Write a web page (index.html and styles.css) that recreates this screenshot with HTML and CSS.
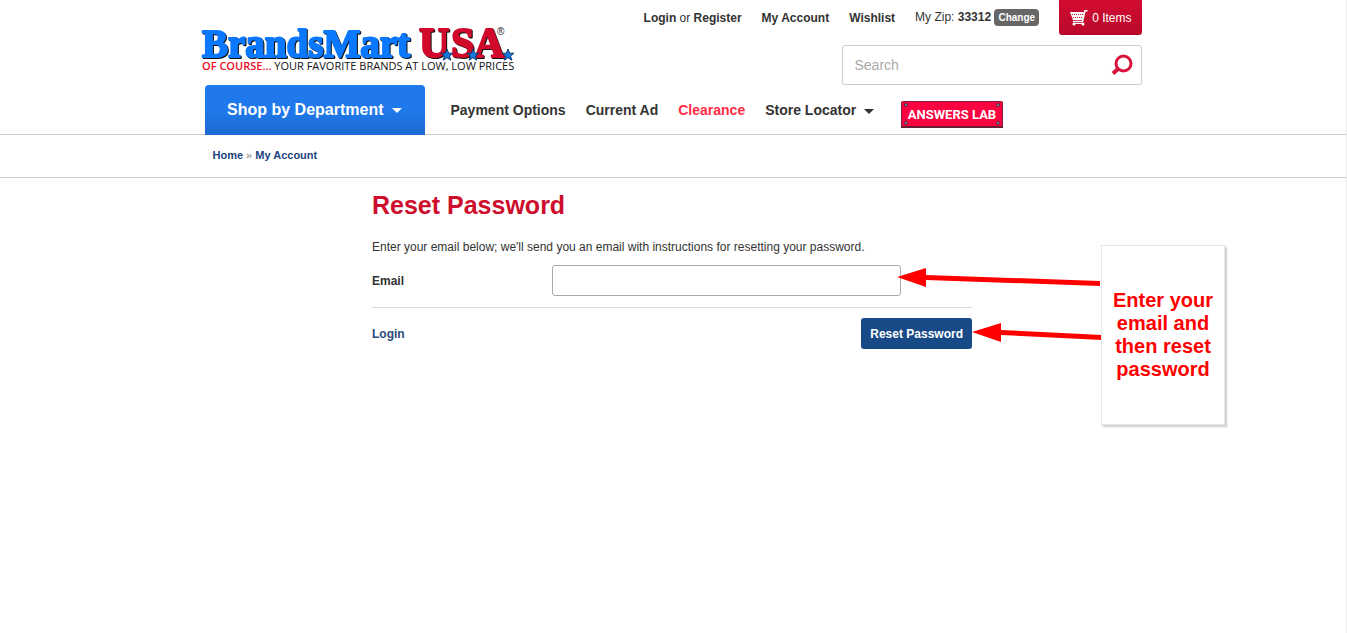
FILE: index.html
```
<!DOCTYPE html>
<html lang="en">
<head>
    <meta charset="UTF-8">
    <meta name="viewport" content="width=device-width, initial-scale=1.0">
    <title>Reset Password - BrandsMart USA</title>
    <link rel="stylesheet" href="styles.css">
</head>
<body>
    <header class="site-header">
        <div class="container header-top">
            <a href="#" class="logo" aria-label="BrandsMart U.S.A.">
                <svg width="316" height="56" viewBox="0 -4 316 56">
                    <defs>
                        <path id="star" d="M0 -6 L1.6 -1.8 L6 -1.8 L2.5 1 L3.8 5.2 L0 2.7 L-3.8 5.2 L-2.5 1 L-6 -1.8 L-1.6 -1.8 Z"/>
                    </defs>
                    <g class="logo-word">
                        <text class="logo-blue" x="1" y="35">BrandsMart</text>
                        <text class="logo-red" x="218" y="35">U</text>
                        <text class="logo-red" x="250" y="35">S</text>
                        <text class="logo-red" x="273" y="35">A</text>
                    </g>
                    <g class="logo-stars">
                        <use href="#star" x="246" y="33"/>
                        <use href="#star" x="272" y="33"/>
                        <use href="#star" x="307" y="33"/>
                    </g>
                    <text class="logo-mark" x="296" y="13">®</text>
                    <text class="logo-tagline" x="1" y="48"><tspan class="tagline-red">OF COURSE...</tspan> YOUR FAVORITE BRANDS AT LOW, LOW PRICES</text>
                </svg>
            </a>
            <div class="header-tools">
                <div class="user-bar">
                    <span><a href="#">Login</a> or <a href="#">Register</a></span>
                    <a href="#">My Account</a>
                    <a href="#">Wishlist</a>
                    <span class="zip">My Zip: <strong>33312</strong> <button type="button" class="zip-button">Change</button></span>
                    <a href="#" class="cart-link">
                        <svg width="18" height="16" viewBox="0 0 18 16">
                            <path d="M0 2 H14 L12.500 10 H3 Z" fill="#fff"/>
                            <path d="M2 4.500 H13 M3 7.500 H13" stroke="#c90c2f" stroke-width="1" stroke-dasharray="1 1"/>
                            <path d="M17.500 .8 H15 L12.500 11.500 H3" fill="none" stroke="#fff" stroke-width="1.500"/>
                            <circle cx="4" cy="14" r="1.500" fill="#fff"/>
                            <circle cx="13" cy="14" r="1.500" fill="#fff"/>
                            <path d="M3 13.500 H14" stroke="#fff"/>
                        </svg>
                        0 Items
                    </a>
                </div>
                <form class="search-form">
                    <input type="text" class="search-input" placeholder="Search" aria-label="Search">
                    <button type="submit" class="search-button" aria-label="Go">
                        <svg width="22" height="22" viewBox="0 0 22 22">
                            <circle cx="12.500" cy="9.500" r="7.500" fill="none" stroke="#d9123c" stroke-width="3"/>
                            <path d="M7.500 14.500 L2 19.500" stroke="#d9123c" stroke-width="4"/>
                        </svg>
                    </button>
                </form>
            </div>
        </div>
        <nav class="main-nav">
            <div class="container nav-row">
                <button type="button" class="shop-button">Shop by Department <span class="caret"></span></button>
                <div class="nav-links">
                    <a href="#">Payment Options</a>
                    <a href="#">Current Ad</a>
                    <a href="#" class="clearance">Clearance</a>
                    <a href="#">Store Locator <span class="caret"></span></a>
                </div>
                <a href="#" class="answers-lab">
                    <svg width="102" height="27" viewBox="0 0 102 27">
                        <rect x=".5" y=".5" width="101" height="26" rx="1" fill="#fb0340" stroke="#7c2039"/>
                        <path d="M0 26 H102" stroke="#6b1d33" stroke-width="2"/>
                        <g fill="#8594a3" stroke="#5c2440">
                            <circle cx="5" cy="4" r="1.500"/>
                            <circle cx="97" cy="4" r="1.500"/>
                            <circle cx="5" cy="22" r="1.500"/>
                            <circle cx="97" cy="22" r="1.500"/>
                        </g>
                        <text class="answers-text" x="51" y="18" text-anchor="middle">ANSWERS LAB</text>
                    </svg>
                </a>
            </div>
        </nav>
    </header>

    <div class="breadcrumb">
        <div class="container breadcrumb-row">
            <a href="#">Home</a> » <a href="#">My Account</a>
        </div>
    </div>

    <main class="account">
        <h1 class="page-title">Reset Password</h1>
        <p class="intro">Enter your email below; we'll send you an email with instructions for resetting your password.</p>
        <form>
            <div class="field-row">
                <label for="email">Email</label>
                <input type="email" id="email" class="email-input">
            </div>
            <div class="action-row">
                <a href="#">Login</a>
                <button type="submit" class="reset-button">Reset Password</button>
            </div>
        </form>

        <!-- Help note and its arrows -->
        <svg class="arrows" width="206" height="80" viewBox="0 0 206 80">
            <g fill="#f00">
                <path d="M0 12 L29 3 V10 L203 16 V21 L29 15 V22 Z"/>
                <path d="M75 67 L104 58 V65 L205 70 V75 L104 70 V77 Z"/>
            </g>
        </svg>
        <aside class="note">Enter your email and then reset password</aside>
    </main>
</body>
</html>
```
FILE: styles.css
```
* {
    box-sizing: border-box;
}

body {
    margin: 0;
    min-height: 100vh;
    border-right: 1px solid #eee;
    font-family: "Liberation Sans", Arial, sans-serif;
    font-size: 12px;
    color: #333;
    background: #fff;
}

a {
    color: inherit;
    font-weight: bold;
    text-decoration: none;
}

button,
input {
    font-family: inherit;
}

button {
    border: none;
    cursor: pointer;
}

.container {
    max-width: 937px;
    margin: 0 auto;
}

/* Header */
.header-top {
    display: flex;
    justify-content: space-between;
}

.logo {
    margin: 18px 0 0 -4px;
}

.logo svg {
    display: block;
}

.logo-word {
    font-family: "Liberation Serif", serif;
    font-weight: bold;
    font-size: 39px;
    stroke-width: 2px;
    stroke-linejoin: round;
    filter: drop-shadow(1px 1px 0 #111);
}

.logo-blue {
    fill: #0a78ff;
    stroke: #0a78ff;
}

.logo-red {
    font-size: 42px;
    fill: #d10a2c;
    stroke: #d10a2c;
}

.logo-stars {
    fill: #1279dd;
    stroke: #123a70;
    stroke-width: 1px;
}

.logo-mark {
    font-size: 10px;
    font-weight: normal;
    fill: #222;
}

.logo-tagline {
    font-family: "Open Sans", sans-serif;
    font-size: 11px;
    font-weight: 500;
    fill: #111;
}

.tagline-red {
    font-weight: 600;
    fill: #ee0a26;
}

.user-bar {
    display: flex;
    justify-content: flex-end;
    align-items: center;
    gap: 20px;
    height: 35px;
}

.zip-button {
    padding: 2px 4px;
    border-radius: 4px;
    background: #666;
    color: #fff;
    font-size: 10px;
    line-height: 13px;
    font-weight: bold;
}

.cart-link {
    display: flex;
    align-items: center;
    gap: 4px;
    height: 35px;
    padding: 0 10px 0 11px;
    border-radius: 0 0 3px 3px;
    background: linear-gradient(#d20c31, #b9092b);
    color: #fff;
    font-weight: normal;
}

.search-form {
    display: flex;
    align-items: center;
    width: 300px;
    height: 40px;
    margin: 10px 0 0 auto;
    border: 1px solid #ccc;
    border-radius: 3px;
}

.search-input {
    flex: 1;
    min-width: 0;
    padding: 0 12px;
    border: none;
    background: none;
    font-size: 14px;
}

.search-input::placeholder {
    color: #aaa;
}

.search-button {
    display: flex;
    padding: 0 8px;
    background: none;
}

/* Navigation */
.main-nav {
    height: 50px;
    border-bottom: 1px solid #ccc;
}

.nav-row {
    display: flex;
    align-items: flex-start;
}

.shop-button {
    width: 220px;
    height: 50px;
    border-radius: 4px 4px 0 0;
    background: linear-gradient(#2079ec 50%, #1c69d1);
    color: #fff;
    font-size: 16px;
    font-weight: bold;
}

.caret {
    display: inline-block;
    margin-left: 4px;
    border: 5px solid transparent;
    border-top-color: currentColor;
    border-bottom: none;
    vertical-align: middle;
}

.nav-links {
    display: flex;
    gap: 20px;
    padding: 0 27px 0 26px;
    font-size: 14px;
    line-height: 50px;
}

.clearance {
    color: #ff2b45;
}

.answers-lab {
    margin-top: 16px;
}

.answers-lab svg {
    display: block;
}

.answers-text {
    font-family: Roboto, sans-serif;
    font-size: 13px;
    font-weight: bold;
    fill: #fff;
}

/* Breadcrumb */
.breadcrumb {
    padding-bottom: 2px;
    border-bottom: 1px solid #ccc;
    font-size: 11px;
    line-height: 40px;
    color: #888;
}

.breadcrumb-row {
    padding-left: 8px;
}

.breadcrumb a {
    color: #1b4480;
}

/* Reset form */
.account {
    position: relative;
    max-width: 602px;
    margin: 0 auto;
    padding-right: 2px;
}

.page-title {
    margin: 0;
    padding: 11px 0 18px;
    font-size: 25px;
    line-height: 32px;
    color: #ce0e2d;
}

.intro {
    margin: 0;
    line-height: 16px;
}

.field-row {
    display: flex;
    align-items: center;
    padding: 10px 0 11px;
    border-bottom: 1px solid #ddd;
}

.field-row label {
    width: 180px;
    font-weight: bold;
}

.email-input {
    width: 349px;
    height: 31px;
    padding: 0 8px;
    border: 1px solid #aaa;
    border-radius: 3px;
}

.action-row {
    display: flex;
    justify-content: space-between;
    align-items: center;
    padding-top: 10px;
}

.action-row a {
    color: #2b4a7a;
}

.reset-button {
    height: 31px;
    padding: 0 9px;
    border-radius: 3px;
    background: #184a87;
    color: #fff;
    font-size: 12px;
    font-weight: bold;
}

.arrows {
    position: absolute;
    top: 87px;
    left: 525px;
}

.note {
    position: absolute;
    top: 67px;
    left: 729px;
    display: flex;
    align-items: center;
    width: 124px;
    height: 180px;
    padding: 0 8px;
    border: 1px solid #e5e5e5;
    background: #fff;
    box-shadow: 2px 2px 2px #ccc;
    font-size: 20px;
    line-height: 23px;
    font-weight: bold;
    text-align: center;
    color: #f00;
}
```
